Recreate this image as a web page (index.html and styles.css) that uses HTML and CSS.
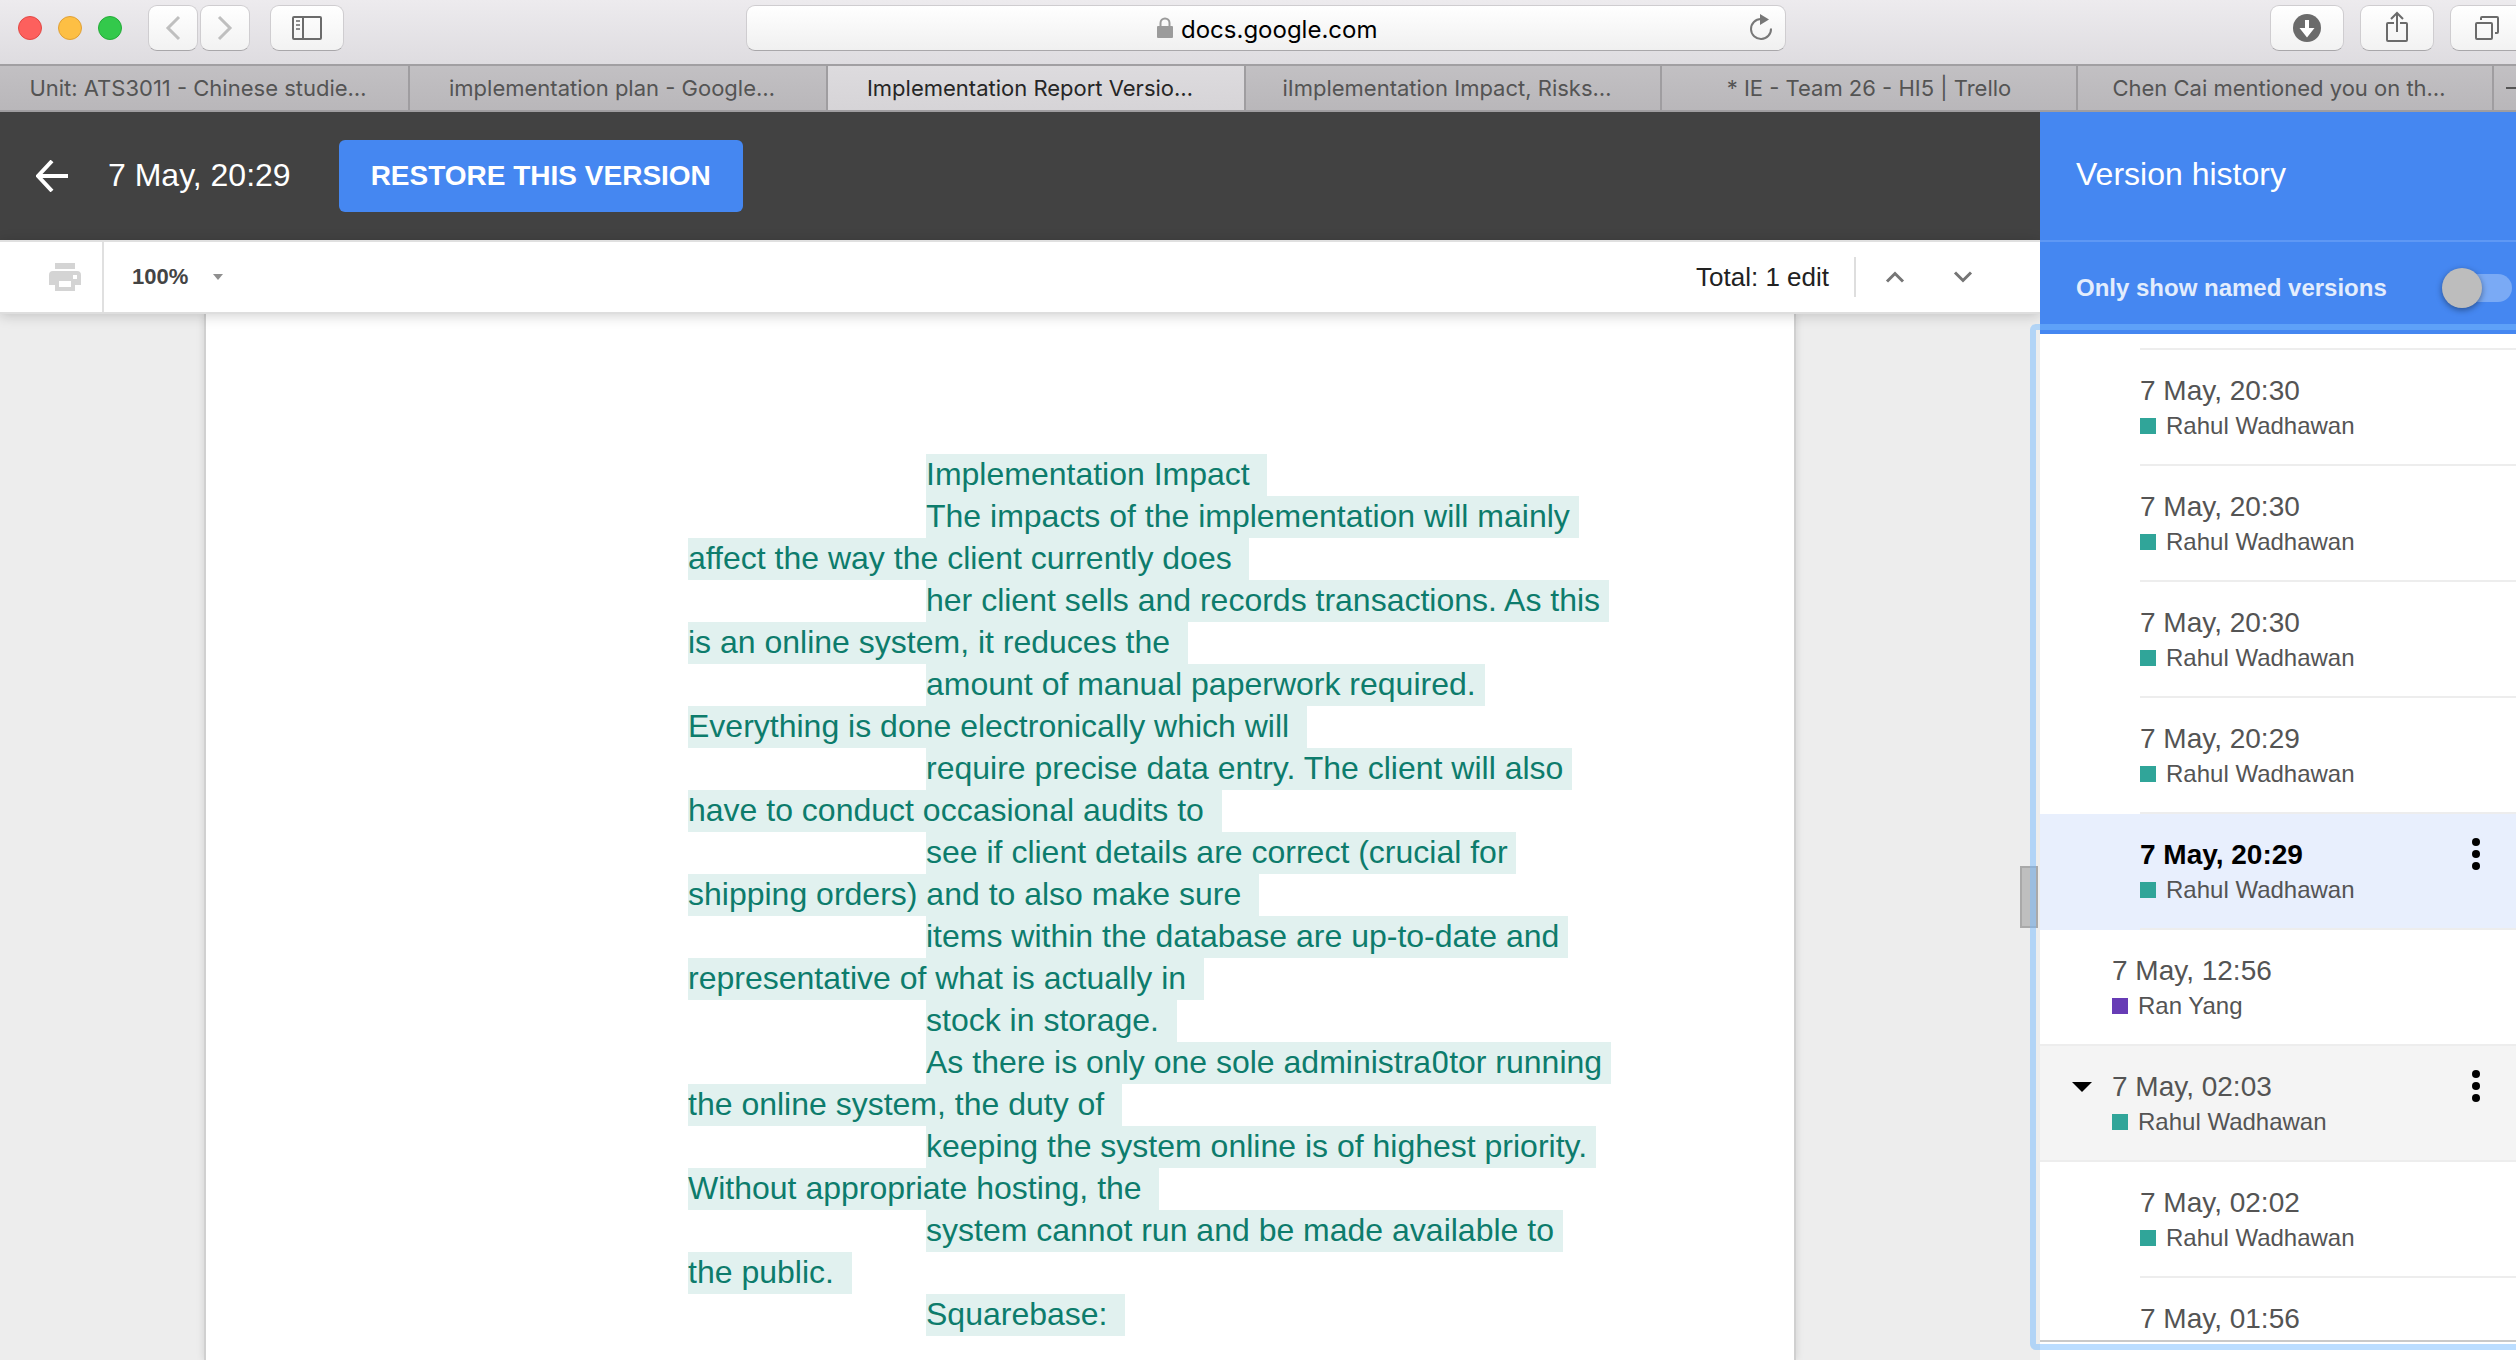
FILE: index.html
```html
<!DOCTYPE html>
<html lang="en">
<head>
<meta charset="utf-8">
<title>Implementation Report Version history</title>
<link rel="stylesheet" href="styles.css">
</head>
<body>
<header class="browser-bar">
  <div class="bar-left">
    <div class="lights"><span class="light light-red"></span><span class="light light-amber"></span><span class="light light-green"></span></div>
    <div class="nav-buttons">
      <button class="chrome-btn chrome-btn-narrow" aria-label="Back"><svg width="48" height="44" viewBox="0 0 48 44"><path d="M30 11 19 22l11 11" fill="none" stroke="#bfbfbf" stroke-width="3"/></svg></button>
      <button class="chrome-btn chrome-btn-narrow" aria-label="Forward"><svg width="48" height="44" viewBox="0 0 48 44"><path d="M18 11l11 11-11 11" fill="none" stroke="#bfbfbf" stroke-width="3"/></svg></button>
    </div>
    <button class="chrome-btn" aria-label="Show sidebar"><svg width="72" height="44" viewBox="0 0 72 44"><g fill="none" stroke="#6b6b6b" stroke-width="2"><rect x="22" y="11" width="28" height="22" rx="1"/><path d="M32 11v22"/></g><path d="M25 15h4M25 19h4M25 23h4" stroke="#8d8d8d" stroke-width="2"/></svg></button>
  </div>
  <div class="address">
    <svg width="16" height="22" viewBox="0 0 16 22"><path d="M3.500 10V6a4.500 4.500 0 0 1 9 0v4" fill="none" stroke="#9b9b9b" stroke-width="2"/><rect y="9" width="16" height="12" rx="1" fill="#9b9b9b"/></svg>
    <input class="address-input" type="text" value="docs.google.com" aria-label="Address">
    <button class="reload" aria-label="Reload"><svg width="24" height="28" viewBox="0 0 24 28"><path d="M22 14.500A10 10 0 1 1 12 5" fill="none" stroke="#777" stroke-width="2"/><path d="M11 0l9 5.500-9 5.500z" fill="#777"/></svg></button>
  </div>
  <div class="bar-right">
    <button class="chrome-btn" aria-label="Downloads"><svg width="72" height="44" viewBox="0 0 72 44"><circle cx="36" cy="22" r="14" fill="#6b6b6b"/><path d="M34 14h4v8h5.500L36 31.500 28.500 22H34z" fill="#fff"/></svg></button>
    <button class="chrome-btn" aria-label="Share"><svg width="72" height="44" viewBox="0 0 72 44"><path d="M33 17h-6q-1 0-1 1v16q0 1 1 1h18q1 0 1-1V18q0-1-1-1h-6M36 26V7M30 13l6-6 6 6" fill="none" stroke="#6b6b6b" stroke-width="2"/></svg></button>
    <button class="chrome-btn" aria-label="Show all tabs"><svg width="72" height="44" viewBox="0 0 72 44"><g fill="none" stroke="#6b6b6b" stroke-width="2"><rect x="25" y="17" width="16" height="16" rx="1"/><path d="M30 14v-2q0-1 1-1h15q1 0 1 1v14q0 1-1 1h-2"/></g></svg></button>
  </div>
</header>
<nav class="tabs" role="tablist">
  <button class="tab tab-cut" role="tab">Unit: ATS3011 - Chinese studie…</button>
  <button class="tab tab-cut" role="tab">implementation plan - Google…</button>
  <button class="tab tab-cut tab-active" role="tab" aria-selected="true">Implementation Report Versio…</button>
  <button class="tab tab-cut" role="tab">iImplementation Impact, Risks…</button>
  <button class="tab" role="tab">* IE - Team 26 - HI5 | Trello</button>
  <button class="tab tab-cut" role="tab">Chen Cai mentioned you on th…</button>
  <button class="tab tab-new" aria-label="New tab"><svg width="22" height="24" viewBox="0 0 22 24"><path d="M12 12h20" stroke="#555" stroke-width="2"/></svg></button>
</nav>
<div class="app">
  <main class="main">
    <div class="title-bar">
      <button class="back" aria-label="Back to document"><svg width="32" height="32" viewBox="0 0 32 32"><path d="M16 1 2 16l14 15M2 16h30" fill="none" stroke="#fff" stroke-width="4"/></svg></button>
      <h1 class="title">7 May, 20:29</h1>
      <button class="restore">RESTORE THIS VERSION</button>
    </div>
    <div class="toolbar">
      <button class="print" aria-label="Print"><svg width="32" height="28" viewBox="0 0 32 28"><path d="M6 0h20v6H6z" fill="#d4d4d4"/><path fill-rule="evenodd" d="M4 8h24q4 0 4 4v10h-6v6H6v-6H0V12q0-4 4-4zM10 18v6h12v-6zM24 12v4h4v-4z" fill="#d4d4d4"/></svg></button>
      <button class="zoom-level">100%<svg width="10" height="6" viewBox="0 0 10 6"><path d="M0 0h10L5 6z" fill="#8f8f8f"/></svg></button>
      <span class="total">Total: 1 edit</span>
      <button class="step" aria-label="Previous edit"><svg width="20" height="12" viewBox="0 0 20 12"><path d="M2 10.500 10 2.500l8 8" fill="none" stroke="#757575" stroke-width="3"/></svg></button>
      <button class="step" aria-label="Next edit"><svg width="20" height="12" viewBox="0 0 20 12"><path d="M2 1.500l8 8 8-8" fill="none" stroke="#757575" stroke-width="3"/></svg></button>
    </div>
    <div class="canvas">
      <article class="page">
        <p><span class="line first">Implementation Impact  </span></p>
        <p><span class="line first">The impacts of the implementation will mainly </span><span class="line">affect the way the client currently does  </span></p>
        <p><span class="line first">her client sells and records transactions. As this </span><span class="line">is an online system, it reduces the  </span></p>
        <p><span class="line first">amount of manual paperwork required. </span><span class="line">Everything is done electronically which will  </span></p>
        <p><span class="line first">require precise data entry. The client will also </span><span class="line">have to conduct occasional audits to  </span></p>
        <p><span class="line first">see if client details are correct (crucial for </span><span class="line">shipping orders) and to also make sure  </span></p>
        <p><span class="line first">items within the database are up-to-date and </span><span class="line">representative of what is actually in  </span></p>
        <p><span class="line first">stock in storage.  </span></p>
        <p><span class="line first">As there is only one sole administra<span class="odd">0</span>tor running </span><span class="line">the online system, the duty of  </span></p>
        <p><span class="line first">keeping the system online is of highest priority. </span><span class="line">Without appropriate hosting, the  </span></p>
        <p><span class="line first">system cannot run and be made available to </span><span class="line">the public.  </span></p>
        <p><span class="line first">Squarebase:  </span></p>
      </article>
    </div>
  </main>
  <aside class="sidebar">
    <h2 class="side-title">Version history</h2>
    <label class="named"><span>Only show named versions</span><input class="switch" type="checkbox"></label>
    <div class="list-wrap">
      <ul class="list">
        <li class="row child"><div class="entry"><button class="version"><span class="date">7 May, 20:30</span><span class="name"><i class="swatch"></i>Rahul Wadhawan</span></button></div></li>
        <li class="row child"><div class="entry"><button class="version"><span class="date">7 May, 20:30</span><span class="name"><i class="swatch"></i>Rahul Wadhawan</span></button></div></li>
        <li class="row child"><div class="entry"><button class="version"><span class="date">7 May, 20:30</span><span class="name"><i class="swatch"></i>Rahul Wadhawan</span></button></div></li>
        <li class="row child"><div class="entry"><button class="version"><span class="date">7 May, 20:29</span><span class="name"><i class="swatch"></i>Rahul Wadhawan</span></button></div></li>
        <li class="row child selected"><div class="entry"><button class="version"><span class="date">7 May, 20:29</span><span class="name"><i class="swatch"></i>Rahul Wadhawan</span></button><button class="more" aria-label="More actions"><svg width="8" height="32" viewBox="0 0 8 32"><circle cx="4" cy="4" r="4"/><circle cx="4" cy="16" r="4"/><circle cx="4" cy="28" r="4"/></svg></button></div></li>
        <li class="row"><div class="entry"><button class="version"><span class="date">7 May, 12:56</span><span class="name"><i class="swatch swatch-purple"></i>Ran Yang</span></button></div></li>
        <li class="row group"><div class="entry"><button class="fold" aria-label="Collapse"><svg width="20" height="10" viewBox="0 0 20 10"><path d="M0 0h20L10 10z"/></svg></button><button class="version"><span class="date">7 May, 02:03</span><span class="name"><i class="swatch"></i>Rahul Wadhawan</span></button><button class="more" aria-label="More actions"><svg width="8" height="32" viewBox="0 0 8 32"><circle cx="4" cy="4" r="4"/><circle cx="4" cy="16" r="4"/><circle cx="4" cy="28" r="4"/></svg></button></div></li>
        <li class="row child"><div class="entry"><button class="version"><span class="date">7 May, 02:02</span><span class="name"><i class="swatch"></i>Rahul Wadhawan</span></button></div></li>
        <li class="row child"><div class="entry"><button class="version"><span class="date">7 May, 01:56</span></button></div></li>
      </ul>
      <div class="thumb"></div>
      <div class="focus-ring"></div>
    </div>
  </aside>
</div>
</body>
</html>
```
FILE: styles.css
```css
* { box-sizing: border-box; }
body {
  margin: 0;
  height: 100vh;
  display: flex;
  flex-direction: column;
  overflow: hidden;
  font-family: "Liberation Sans", Arial, sans-serif;
  color: #545454;
  background: #fff;
}
button, input { font: inherit; color: inherit; }
button { border: 0; padding: 0; background: none; text-align: left; }
svg { display: block; flex: none; }
p, h1, h2, ul { margin: 0; padding: 0; font-weight: normal; }

/* Browser window */
.browser-bar {
  flex: none;
  display: grid;
  grid-template-columns: 746fr 1040fr 730fr;
  height: 66px;
  padding-top: 5px;
  align-items: start;
  background: linear-gradient(#edebee, #dedce0);
  border-bottom: 2px solid #a19fa2;
}
.bar-left { display: flex; align-items: center; gap: 20px; padding-left: 18px; }
.lights { display: flex; gap: 16px; margin-right: 6px; }
.light { width: 24px; height: 24px; border-radius: 50%; border: 1px solid; }
.light-red { background: #fd605d; border-color: #e24844; }
.light-amber { background: #fdbf44; border-color: #e0a036; }
.light-green { background: #33c94b; border-color: #24ab38; }
.nav-buttons { display: flex; gap: 2px; }
.chrome-btn {
  flex: none;
  width: 74px;
  height: 46px;
  border: 1px solid #cfcdd0;
  border-bottom-color: #a9a7aa;
  border-radius: 9px;
  background: linear-gradient(#fff, #f2f2f2);
}
.chrome-btn-narrow { width: 50px; }
.bar-right { display: flex; justify-content: flex-end; gap: 16px; margin-right: -8px; }
.address {
  display: flex;
  align-items: center;
  gap: 8px;
  height: 46px;
  padding: 0 12px 0 52px;
  border: 1px solid #cfcdd0;
  border-bottom-color: #a9a7aa;
  border-radius: 9px;
  background: linear-gradient(#fff, #f0f0f0);
}
.address > svg { margin-left: auto; }
.address-input {
  width: 202px;
  padding: 2px 0 0;
  border: 0;
  background: none;
  font-family: Inter, sans-serif;
  font-size: 24px;
  color: #000;
}
.reload { margin-left: auto; }

.tabs {
  flex: none;
  display: grid;
  grid-template-columns: 410fr 418fr 418fr 416fr 416fr 416fr 22fr;
  height: 46px;
  border-bottom: 2px solid #9f9da0;
  background: linear-gradient(#c2c0c3, #b9b7ba);
}
.tab {
  min-width: 0;
  border-right: 2px solid #9f9da0;
  font-family: Inter, sans-serif;
  font-size: 22px;
  text-align: center;
  white-space: nowrap;
  overflow: hidden;
}
.tab-cut { padding-right: 12px; }
.tab-active { background: linear-gradient(#dddbde, #d6d4d7); color: #262626; }
.tab-new { border: 0; }

/* Application */
.app { flex: 1; min-height: 0; display: flex; }
.main { flex: 1; min-width: 0; display: flex; flex-direction: column; }
.title-bar {
  flex: none;
  display: flex;
  align-items: center;
  height: 128px;
  padding-left: 36px;
  background: #424242;
  color: #fff;
}
.title { margin: 0 48px 0 40px; padding-bottom: 2px; font-size: 32px; line-height: 40px; }
.restore {
  height: 72px;
  padding: 0 32px;
  border-radius: 6px;
  background: #4587f1;
  font-size: 28px;
  font-weight: bold;
}
.toolbar {
  flex: none;
  position: relative;
  z-index: 1;
  display: flex;
  align-items: center;
  height: 74px;
  padding-right: 48px;
  border-top: 2px solid #e0e0e0;
  border-bottom: 2px solid #dedede;
  background: #fff;
  box-shadow: 0 2px 12px rgba(0, 0, 0, .18);
}
.print { align-self: stretch; width: 104px; padding-left: 49px; border-right: 2px solid #e0e0e0; }
.zoom-level { display: flex; align-items: center; gap: 25px; margin-left: 28px; font-size: 22px; font-weight: bold; color: #444; }
.total { margin-left: auto; padding-right: 25px; border-right: 2px solid #dedede; font-size: 26px; line-height: 40px; color: #222; }
.step { width: 68px; padding-left: 29px; }
.canvas {
  flex: 1;
  min-height: 0;
  display: flex;
  justify-content: center;
  padding-right: 40px;
  overflow: hidden;
  background: #ededed;
}
.page {
  width: 1592px;
  padding: 140px 180px 0 482px;
  border: solid #d0d0d0;
  border-width: 0 2px;
  background: #fff;
  box-shadow: 0 0 8px rgba(0, 0, 0, .12);
  font-size: 32px;
  color: #0d7c6c;
}
.line {
  display: block;
  width: fit-content;
  height: 42px;
  line-height: 40px;
  white-space: pre;
  background: #e1f1ef;
}
.first { margin-left: 238px; }
.odd { font-family: Roboto, sans-serif; }

/* Version history */
.sidebar {
  flex: none;
  position: relative;
  z-index: 2;
  width: 476px;
  display: flex;
  flex-direction: column;
  background: #fff;
}
.side-title {
  flex: none;
  height: 130px;
  padding-left: 36px;
  border-bottom: 2px solid #5f98f4;
  background: #4587f1;
  color: #fff;
  font-size: 32px;
  line-height: 124px;
}
.named {
  flex: none;
  display: flex;
  align-items: center;
  justify-content: space-between;
  height: 92px;
  padding: 0 4px 0 36px;
  background: #4587f1;
  color: #e3edfd;
  font-size: 24px;
  font-weight: bold;
}
.switch {
  appearance: none;
  position: relative;
  width: 64px;
  height: 28px;
  margin: 0;
  border-radius: 14px;
  background: #7aaaf5;
}
.switch::before {
  content: "";
  position: absolute;
  left: -6px;
  top: -6px;
  width: 40px;
  height: 40px;
  border-radius: 50%;
  background: #bdbdbd;
  box-shadow: 0 2px 6px rgba(0, 0, 0, .4);
}
.list-wrap { flex: 1; min-height: 0; position: relative; padding-bottom: 18px; }
.list {
  height: 100%;
  padding-top: 14px;
  overflow: hidden;
  list-style: none;
  border-bottom: 2px solid #c9c9c9;
}
.entry {
  display: flex;
  align-items: flex-start;
  height: 116px;
  padding-left: 72px;
  border-bottom: 2px solid #ededed;
}
.child .entry { margin-left: 100px; padding-left: 0; }
.row:first-child .entry { height: 118px; border-top: 2px solid #ededed; }
.version { flex: 1; padding-top: 23px; }
.date { display: block; font-size: 28px; line-height: 36px; }
.name { display: flex; align-items: center; gap: 10px; font-size: 24px; line-height: 34px; }
.swatch { width: 16px; height: 16px; background: #30a599; }
.swatch-purple { background: #673cb5; }
.selected { background: #e8effd; }
.selected .date { color: #000; font-weight: bold; }
.group { background: #f4f4f4; }
.group .entry { padding-left: 0; }
.fold { width: 72px; padding: 36px 0 0 32px; }
.more { width: 44px; padding-top: 24px; }
.thumb {
  position: absolute;
  left: -20px;
  top: 532px;
  width: 18px;
  height: 62px;
  border: 2px solid #a9a9a9;
  background: #bfbfbf;
}
.focus-ring {
  position: absolute;
  inset: -10px -10px 10px -10px;
  border: 6px solid rgba(120, 188, 255, .5);
  border-radius: 6px;
  pointer-events: none;
}
```
